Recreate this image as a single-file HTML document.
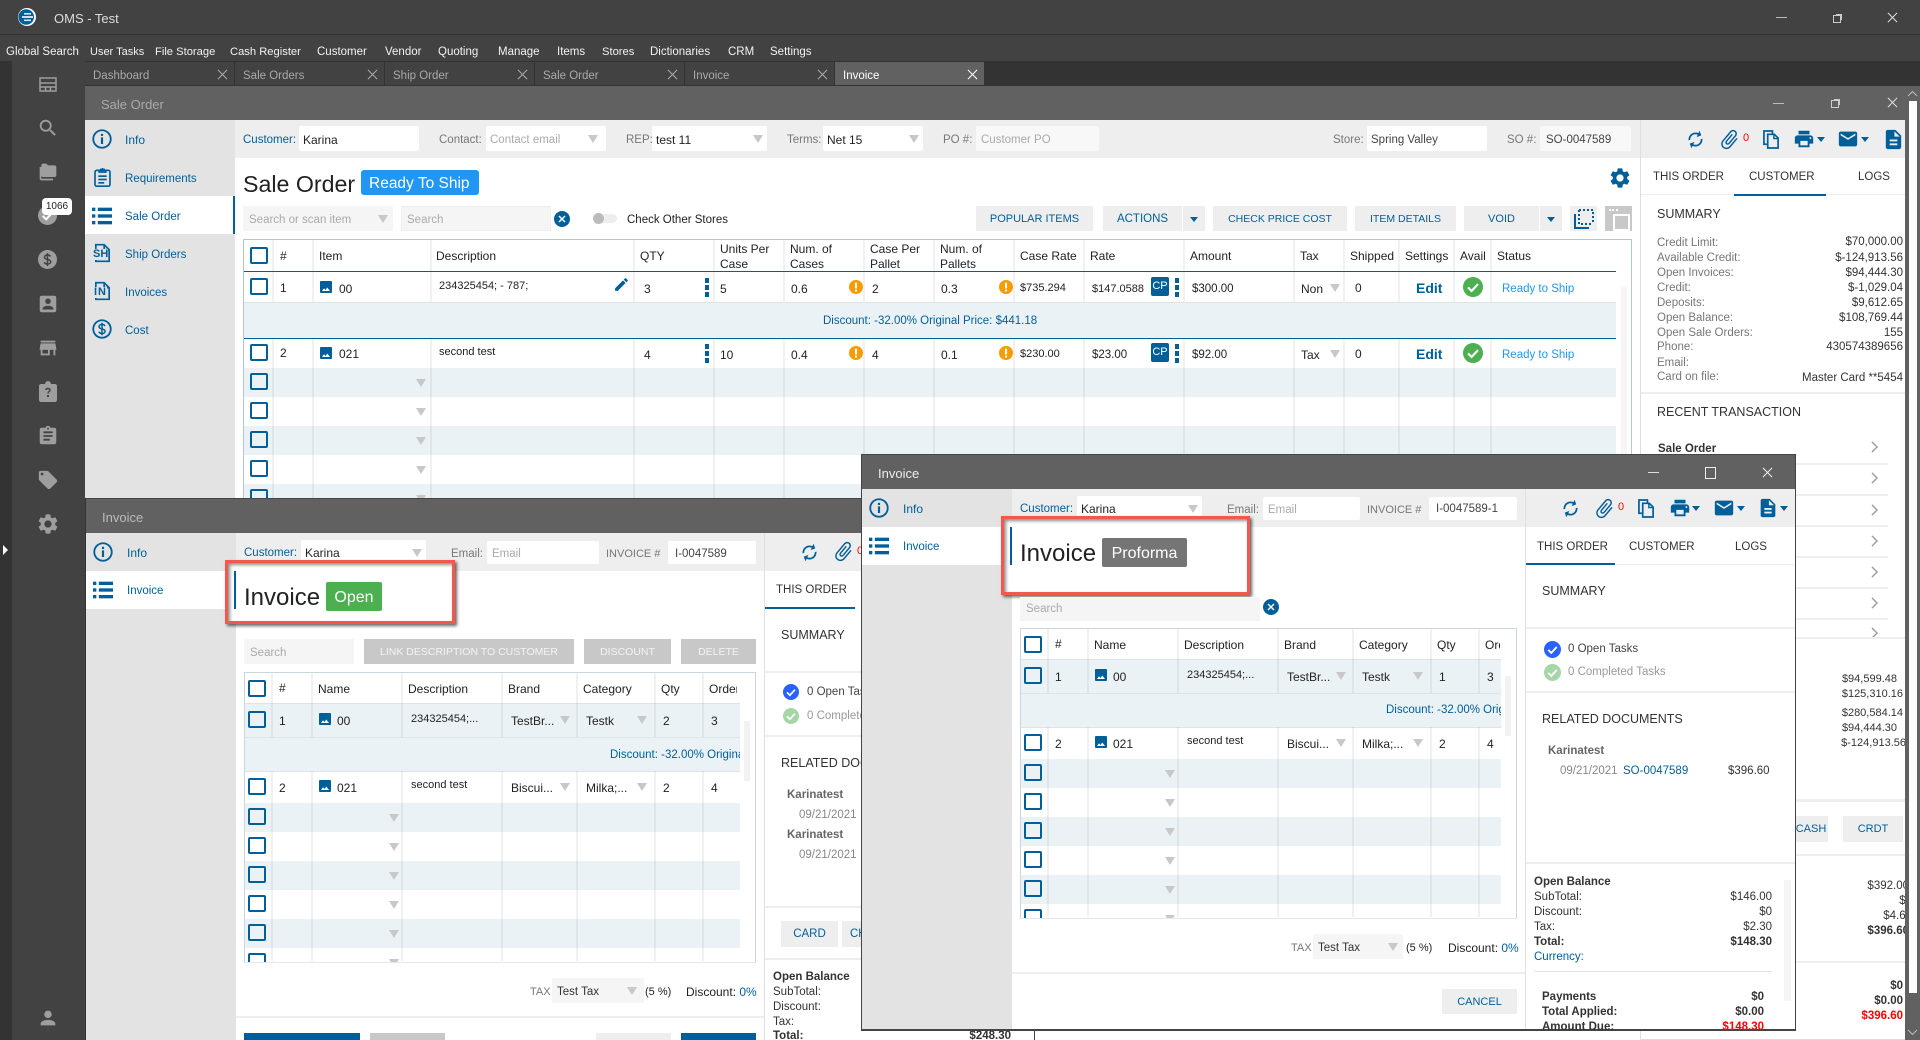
<!DOCTYPE html>
<html lang="en"><head><meta charset="utf-8"><title>OMS - Test</title>
<style>
html,body{margin:0;padding:0;background:#fff}
#r{position:relative;width:1920px;height:1040px;overflow:hidden;font-family:"Liberation Sans",sans-serif;font-size:12px;color:#222;background:#fff}
p{position:absolute;margin:0;white-space:nowrap;line-height:14px;font-size:12px;transform:translateY(1px)}
u{position:absolute;display:block;text-decoration:none}
svg{position:absolute;fill:currentColor;color:#005f99;overflow:visible}
.bl{color:#005f99}.g{color:#777}.ph{color:#aaa}.m{color:#f2f2f2;font-size:11.5px;top:44px}
.tb{color:#aaa;font-size:11.5px;top:68px}
.a{width:0;height:0;border-left:5px solid transparent;border-right:5px solid transparent;border-top:8px solid #c8c8c8}
.at{width:0;height:0;border-left:4px solid transparent;border-right:4px solid transparent;border-top:5px solid #005f99}
.btn{background:#eee;color:#005f99;font-size:11px;text-align:center;height:25px;line-height:27px;transform:none}
.dis{background:#c8c8c8;color:#f3f3f3;font-size:10.5px;text-align:center;height:25px;line-height:27px;transform:none}
.c{width:14px;height:13px;border:2px solid #005f99;border-radius:2px}
.in{background:#fff;height:25px;border-radius:2px}
.d{width:4px;height:5px;background:#005f99}
.band{background:#ebf2f6}
.ln{background:rgba(40,60,80,.07);width:2px}
.hr{background:#eee;height:2px}
.s{font-size:11.5px}
.sm{font-size:11.5px;color:#777}
.rv{font-size:11.5px;color:#333}
.box{border:3px solid #f4574b;background:#fff;box-shadow:2px 2px 3px rgba(0,0,0,.6),inset 2px 2px 3px rgba(0,0,0,.45)}
.tbl{overflow:hidden;border:1px solid #c9d6e0;border-bottom:1px solid #e4e8ea;background:#fff;height:289px}
.tbl p{transform:none}
.nv{color:#005f99;font-size:12px}
.cp{background:#005f99;color:#fff;font-size:11px;text-align:center;width:18px;height:19px;line-height:19px;border-radius:2px;transform:none}
.ed{color:#005f99;font-size:14px;font-weight:bold}
</style></head><body><div id="r">
<svg width="0" height="0" style="position:absolute">
<defs>
<symbol id="info" viewBox="0 0 24 24"><circle cx="12" cy="12" r="10.5" fill="none" stroke="currentColor" stroke-width="2.2"/><rect x="10.7" y="10" width="2.6" height="8"/><rect x="10.7" y="5.8" width="2.6" height="2.6"/></symbol>
<symbol id="list" viewBox="0 0 24 24"><rect x="0" y="2" width="4" height="4"/><rect x="7" y="2" width="17" height="4"/><rect x="0" y="10" width="4" height="4"/><rect x="7" y="10" width="17" height="4"/><rect x="0" y="18" width="4" height="4"/><rect x="7" y="18" width="17" height="4"/></symbol>
<symbol id="req" viewBox="0 0 20 24"><path d="M3 4h3v2h8V4h3c1 0 2 1 2 2v15c0 1-1 2-2 2H3c-1 0-2-1-2-2V6c0-1 1-2 2-2z" fill="none" stroke="currentColor" stroke-width="2"/><path d="M7 5V2h2a1 1 0 0 1 2 0h2v3z"/><rect x="5" y="10" width="10" height="2"/><rect x="5" y="14" width="10" height="2"/><rect x="5" y="18" width="7" height="2"/></symbol>
<symbol id="doc" viewBox="0 0 20 24"><path d="M2 8V2h10l6 6v14H2v-2" fill="none" stroke="currentColor" stroke-width="2"/><path d="M12 2v6h6" fill="none" stroke="currentColor" stroke-width="2"/></symbol>
<symbol id="cost" viewBox="0 0 24 24"><circle cx="12" cy="12" r="10.5" fill="none" stroke="currentColor" stroke-width="2.2"/><path d="M15.5 8.5c-.5-1.400-2-2-3.500-2-2 0-3.500 1-3.500 2.800 0 3.700 7.200 1.700 7.200 5.400 0 1.800-1.700 2.800-3.700 2.800-1.700 0-3.200-.8-3.700-2.300M12 4.500v15" fill="none" stroke="currentColor" stroke-width="1.800"/></symbol>
<symbol id="gear" viewBox="0 0 24 24"><path d="M19.14 12.94c.04-.3.06-.61.06-.94 0-.32-.02-.64-.07-.94l2.03-1.58c.18-.14.23-.41.12-.61l-1.92-3.32c-.12-.22-.37-.29-.59-.22l-2.39.96c-.5-.38-1.03-.7-1.62-.94l-.36-2.54c-.04-.24-.24-.41-.48-.41h-3.84c-.24 0-.43.17-.47.41l-.36 2.54c-.59.24-1.13.57-1.62.94l-2.39-.96c-.22-.08-.47 0-.59.22L2.74 8.87c-.12.21-.08.47.12.61l2.03 1.58c-.05.3-.09.63-.09.94s.02.64.07.94l-2.03 1.58c-.18.14-.23.41-.12.61l1.92 3.32c.12.22.37.29.59.22l2.39-.96c.5.38 1.03.7 1.62.94l.36 2.54c.05.24.24.41.48.41h3.84c.24 0 .44-.17.47-.41l.36-2.54c.59-.24 1.13-.56 1.62-.94l2.39.96c.22.08.47 0 .59-.22l1.92-3.32c.12-.22.07-.47-.12-.61l-2.01-1.58zM12 15.6c-1.98 0-3.6-1.62-3.6-3.6s1.62-3.6 3.6-3.6 3.6 1.62 3.6 3.6-1.62 3.6-3.6 3.6z"/></symbol>
<symbol id="print" viewBox="0 0 24 24"><path d="M19 8H5c-1.66 0-3 1.34-3 3v6h4v4h12v-4h4v-6c0-1.66-1.34-3-3-3zm-3 11H8v-5h8v5zm3-7c-.55 0-1-.45-1-1s.45-1 1-1 1 .45 1 1-.45 1-1 1zm-1-9H6v4h12V3z"/></symbol>
<symbol id="mail" viewBox="0 0 24 24"><path d="M20 4H4c-1.1 0-1.99.9-1.99 2L2 18c0 1.1.9 2 2 2h16c1.1 0 2-.9 2-2V6c0-1.1-.9-2-2-2zm0 4l-8 5-8-5V6l8 5 8-5v2z"/></symbol>
<symbol id="desc" viewBox="0 0 24 24"><path d="M14 2H6c-1.1 0-1.99.9-1.99 2L4 20c0 1.1.89 2 1.99 2H18c1.1 0 2-.9 2-2V8l-6-6zm2 16H8v-2h8v2zm0-4H8v-2h8v2zm-3-5V3.500L18.500 9H13z"/></symbol>
<symbol id="clip" viewBox="0 0 24 24"><g transform="rotate(40 12 12)"><path d="M16.500 6v11.500c0 2.210-1.790 4-4 4s-4-1.790-4-4V5c0-1.380 1.120-2.500 2.500-2.500s2.500 1.120 2.500 2.500v10.500c0 .55-.45 1-1 1s-1-.45-1-1V6H10v9.500c0 1.380 1.120 2.500 2.500 2.500s2.500-1.120 2.500-2.500V5c0-2.210-1.790-4-4-4S7 2.790 7 5v12.500c0 3.040 2.460 5.500 5.500 5.500s5.500-2.460 5.500-5.500V6h-1.500z"/></g></symbol>
<symbol id="copy" viewBox="0 0 18 20"><path d="M4 15H1V1h9v3M5 4.500h7l4 4V19H5z" fill="none" stroke="currentColor" stroke-width="1.800"/><path d="M11.500 4.500v4.500h4.500" fill="none" stroke="currentColor" stroke-width="1.500"/></symbol>
<symbol id="sync" viewBox="0 0 24 24"><g transform="rotate(25 12 12)"><path d="M12 6v3l4-4-4-4v3c-4.420 0-8 3.580-8 8 0 1.570.46 3.030 1.240 4.260L6.700 14.800c-.45-.83-.7-1.790-.7-2.800 0-3.310 2.690-6 6-6zm6.760 1.740L17.300 9.200c.44.84.7 1.790.7 2.800 0 3.310-2.690 6-6 6v-3l-4 4 4 4v-3c4.420 0 8-3.580 8-8 0-1.570-.46-3.030-1.240-4.260z"/></g></symbol>
<symbol id="img" viewBox="0 0 24 24"><rect x="0" y="0" width="24" height="24" rx="2"/><path d="M4 20l4-5.500 3 3.500 3.500-5 5.500 7z" fill="#fff"/></symbol>
<symbol id="edit" viewBox="0 0 24 24"><path d="M3 17.250V21h3.750L17.810 9.940l-3.750-3.750L3 17.250zM20.710 7.040c.39-.39.39-1.020 0-1.410l-2.340-2.340c-.39-.39-1.020-.39-1.410 0l-1.830 1.830 3.750 3.750 1.830-1.830z"/></symbol>
<symbol id="ok" viewBox="0 0 24 24"><circle cx="12" cy="12" r="12"/><path d="M6 12.500l4.300 4.300L18 8.500" fill="none" stroke="#fff" stroke-width="2.600"/></symbol>
<symbol id="warn" viewBox="0 0 24 24"><circle cx="12" cy="12" r="12" fill="#f59c00"/><rect x="10.200" y="4.500" width="3.600" height="10" rx="1" fill="#fff"/><rect x="10.200" y="16.200" width="3.600" height="3.600" rx="1" fill="#fff"/></symbol>
<symbol id="x" viewBox="0 0 12 12"><path d="M1 1l10 10M11 1L1 11" fill="none" stroke="currentColor" stroke-width="1.100"/></symbol>
<symbol id="chev" viewBox="0 0 8 14"><path d="M1 1l6 6-6 6" fill="none" stroke="#9a9a9a" stroke-width="1.600"/></symbol>
<symbol id="xc" viewBox="0 0 16 16"><circle cx="8" cy="8" r="8" fill="#005f99"/><path d="M5 5l6 6M11 5l-6 6" stroke="#fff" stroke-width="1.500" fill="none"/></symbol>
</defs></svg>

<!-- top chrome -->
<u style="left:0;top:0;width:1920px;height:61px;background:#424242"></u>
<u style="left:0;top:34px;width:1920px;height:1px;background:#333"></u>
<svg width="18" height="18" viewBox="0 0 18 18" style="left:18px;top:8px"><circle cx="9" cy="9" r="9" fill="#fff"/><circle cx="8.200" cy="9" r="7.800" fill="#005f99"/><rect x="6" y="5" width="7" height="1.600" fill="#cfe6f5"/><rect x="4" y="8.200" width="11" height="1.600" fill="#fff"/><rect x="6" y="11.500" width="7" height="1.600" fill="#cfe6f5"/></svg>
<p style="left:54px;top:11px;font-size:13px;color:#ddd">OMS - Test</p>
<u style="left:1776px;top:17px;width:11px;height:1px;background:#bbb"></u>
<u style="left:1833px;top:15px;width:6px;height:6px;border:1px solid #ccc;box-shadow:2px -2px 0 -1px #ccc"></u>
<svg width="11" height="11" style="left:1887px;top:12px;color:#ddd"><use href="#x"/></svg>

<p class="m" style="left:6px">Global Search</p><p class="m" style="left:90px;font-size:11px">User Tasks</p><p class="m" style="left:155px;font-size:11.2px">File Storage</p><p class="m" style="left:230px;font-size:11.2px">Cash Register</p><p class="m" style="left:317px">Customer</p><p class="m" style="left:385px">Vendor</p><p class="m" style="left:438px">Quoting</p><p class="m" style="left:498px">Manage</p><p class="m" style="left:557px">Items</p><p class="m" style="left:602px;font-size:11.2px">Stores</p><p class="m" style="left:650px">Dictionaries</p><p class="m" style="left:728px">CRM</p><p class="m" style="left:770px">Settings</p>

<!-- rail -->
<u style="left:0;top:61px;width:12px;height:979px;background:#333"></u>
<u style="left:12px;top:61px;width:73px;height:979px;background:#424242"></u>
<svg width="18" height="15" viewBox="0 0 18 15" style="left:39px;top:77px;color:#9e9e9e"><path d="M1 1h16v13H1zM1 6h16M1 10h16M6.500 10v4M11.500 10v4" fill="none" stroke="currentColor" stroke-width="1.500"/></svg>
<svg width="22" height="22" style="left:37px;top:117px;color:#9e9e9e" viewBox="0 0 24 24"><path d="M15.500 14h-.79l-.28-.27C15.410 12.590 16 11.110 16 9.500 16 5.910 13.090 3 9.500 3S3 5.910 3 9.500 5.910 16 9.500 16c1.610 0 3.090-.59 4.230-1.570l.27.28v.79l5 4.990L20.490 19l-4.990-5zm-6 0C7.010 14 5 11.990 5 9.500S7.010 5 9.500 5 14 7.010 14 9.500 11.990 14 9.500 14z"/></svg>
<svg width="20" height="20" style="left:38px;top:162px;color:#9e9e9e" viewBox="0 0 24 24"><path d="M4 6H2v14c0 1.100.9 2 2 2h14v-2H4V6zm16-2h-8l-2-2H6c-1.100 0-2 .9-2 2v12c0 1.100.9 2 2 2h14c1.100 0 2-.9 2-2V6c0-1.100-.9-2-2-2z"/></svg>
<svg width="19" height="19" style="left:38px;top:206px;color:#9e9e9e"><use href="#ok"/></svg>
<u style="left:42px;top:198px;width:30px;height:17px;background:#fff;border-radius:4px"></u>
<p style="left:42px;top:199px;width:30px;text-align:center;font-size:10px;color:#222">1066</p>
<svg width="19" height="19" style="left:38px;top:250px;color:#9e9e9e" viewBox="0 0 19 19"><circle cx="9.500" cy="9.500" r="9.500"/><path d="M12.500 6.500c-.5-1-1.700-1.500-3-1.500-1.700 0-3 .8-3 2.200 0 3 6.200 1.400 6.200 4.500 0 1.500-1.400 2.300-3.200 2.300-1.400 0-2.700-.6-3.200-1.800M9.500 3v13" stroke="#424242" stroke-width="1.500" fill="none"/></svg>
<svg width="22" height="22" style="left:37px;top:293px;color:#9e9e9e" viewBox="0 0 24 24"><path d="M19 3H5c-1.100 0-2 .9-2 2v14c0 1.100.9 2 2 2h14c1.100 0 2-.9 2-2V5c0-1.100-.9-2-2-2zm-7 3c1.660 0 3 1.340 3 3s-1.340 3-3 3-3-1.340-3-3 1.340-3 3-3zm6 12H6v-1c0-2 4-3.100 6-3.100s6 1.100 6 3.100v1z"/></svg>
<svg width="22" height="22" style="left:37px;top:337px;color:#9e9e9e" viewBox="0 0 24 24"><path d="M20 4H4v2h16V4zm1 10v-2l-1-5H4l-1 5v2h1v6h10v-6h4v6h2v-6h1zm-9 4H6v-4h6v4z"/></svg>
<svg width="18" height="20" viewBox="0 0 18 20" style="left:39px;top:382px;color:#9e9e9e"><path d="M2 2h4a3 3 0 0 1 6 0h4c1 0 2 1 2 2v14c0 1-1 2-2 2H2c-1 0-2-1-2-2V4c0-1 1-2 2-2z"/><path d="M7 8c0-2 4-2 4 0 0 1.500-2 1.500-2 3.500" stroke="#424242" stroke-width="1.500" fill="none"/><rect x="8" y="13" width="2" height="2" fill="#424242"/></svg>
<svg width="22" height="22" style="left:37px;top:425px;color:#9e9e9e" viewBox="0 0 24 24"><path d="M19 3h-4.180C14.400 1.840 13.300 1 12 1c-1.300 0-2.400.84-2.820 2H5c-1.100 0-2 .9-2 2v14c0 1.100.9 2 2 2h14c1.100 0 2-.9 2-2V5c0-1.100-.9-2-2-2zm-7 0c.55 0 1 .45 1 1s-.45 1-1 1-1-.45-1-1 .45-1 1-1zm2 14H7v-2h7v2zm3-4H7v-2h10v2zm0-4H7V7h10v2z"/></svg>
<svg width="22" height="22" style="left:37px;top:469px;color:#9e9e9e" viewBox="0 0 24 24"><path d="M21.410 11.580l-9-9C12.050 2.220 11.550 2 11 2H4c-1.100 0-2 .9-2 2v7c0 .55.22 1.050.59 1.420l9 9c.36.36.86.58 1.410.58.55 0 1.050-.22 1.410-.59l7-7c.37-.36.59-.86.59-1.410 0-.55-.23-1.060-.59-1.420zM5.500 7C4.670 7 4 6.330 4 5.500S4.670 4 5.500 4 7 4.670 7 5.500 6.330 7 5.500 7z"/></svg>
<svg width="24" height="24" style="left:36px;top:512px;color:#9e9e9e"><use href="#gear"/></svg>
<svg width="22" height="22" style="left:37px;top:1007px;color:#9e9e9e" viewBox="0 0 24 24"><path d="M12 12c2.210 0 4-1.790 4-4s-1.790-4-4-4-4 1.790-4 4 1.790 4 4 4zm0 2c-2.670 0-8 1.340-8 4v2h16v-2c0-2.660-5.330-4-8-4z"/></svg>
<u style="left:3px;top:545px;width:0;height:0;border-top:5px solid transparent;border-bottom:5px solid transparent;border-left:5px solid #fff"></u>

<!-- tab bar -->
<u style="left:85px;top:61px;width:1835px;height:25px;background:#333"></u>
<u style="left:85px;top:62px;width:149px;height:23px;background:#424242"></u><u style="left:235px;top:62px;width:149px;height:23px;background:#424242"></u><u style="left:385px;top:62px;width:149px;height:23px;background:#424242"></u><u style="left:535px;top:62px;width:149px;height:23px;background:#424242"></u><u style="left:685px;top:62px;width:149px;height:23px;background:#424242"></u><u style="left:835px;top:62px;width:149px;height:23px;background:#616161"></u>
<p class="tb" style="left:93px">Dashboard</p><p class="tb" style="left:243px">Sale Orders</p><p class="tb" style="left:393px">Ship Order</p><p class="tb" style="left:543px">Sale Order</p><p class="tb" style="left:693px">Invoice</p><p class="tb" style="left:843px;color:#fff">Invoice</p>
<svg width="11" height="11" style="left:217px;top:69px;color:#aaa"><use href="#x"/></svg><svg width="11" height="11" style="left:367px;top:69px;color:#aaa"><use href="#x"/></svg><svg width="11" height="11" style="left:517px;top:69px;color:#aaa"><use href="#x"/></svg><svg width="11" height="11" style="left:667px;top:69px;color:#aaa"><use href="#x"/></svg><svg width="11" height="11" style="left:817px;top:69px;color:#aaa"><use href="#x"/></svg><svg width="11" height="11" style="left:967px;top:69px;color:#fff"><use href="#x"/></svg>

<!-- ================= SALE ORDER WINDOW ================= -->
<u style="left:85px;top:86px;width:1835px;height:34px;background:#616161"></u>
<p style="left:101px;top:97px;font-size:13px;color:#aaa">Sale Order</p>
<u style="left:1773px;top:103px;width:11px;height:1px;background:#bbb"></u>
<u style="left:1831px;top:100px;width:6px;height:6px;border:1px solid #ccc;box-shadow:2px -2px 0 -1px #ccc"></u>
<svg width="11" height="11" style="left:1887px;top:97px;color:#ddd"><use href="#x"/></svg>
<u style="left:85px;top:120px;width:150px;height:378px;background:#e3e3e3"></u>
<u style="left:85px;top:196px;width:148px;height:38px;background:#fff"></u><u style="left:233px;top:196px;width:2px;height:38px;background:#005f99"></u>
<svg width="20" height="20" style="left:92px;top:129px"><use href="#info"/></svg><p class="nv" style="left:125px;top:132px">Info</p>
<svg width="17" height="20" style="left:94px;top:167px"><use href="#req"/></svg><p class="nv" style="left:125px;top:171px;font-size:11.500px">Requirements</p>
<svg width="20" height="20" style="left:92px;top:206px"><use href="#list"/></svg><p class="nv" style="left:125px;top:209px;font-size:11.500px">Sale Order</p>
<svg width="17" height="20" style="left:94px;top:243px"><use href="#doc"/></svg><p style="left:93px;top:248px;font-size:11px;font-weight:bold;color:#005f99;background:#e3e3e3;line-height:11px">SH</p><p class="nv" style="left:125px;top:247px;font-size:11.500px">Ship Orders</p>
<svg width="17" height="20" style="left:94px;top:281px"><use href="#doc"/></svg><p style="left:94px;top:286px;font-size:11px;font-weight:bold;color:#005f99;background:#e3e3e3;line-height:11px;letter-spacing:1px">IN</p><p class="nv" style="left:125px;top:285px;font-size:11.500px">Invoices</p>
<svg width="20" height="20" style="left:92px;top:319px"><use href="#cost"/></svg><p class="nv" style="left:125px;top:323px;font-size:11.500px">Cost</p>

<!-- form band -->
<u style="left:235px;top:120px;width:1670px;height:38px;background:#eee"></u>
<u style="left:299px;top:126px;width:120px" class="in"></u><u style="left:486px;top:126px;width:120px" class="in"></u><u style="left:652px;top:126px;width:115px" class="in"></u><u style="left:823px;top:126px;width:100px" class="in"></u><u style="left:976px;top:126px;width:123px;background:#f8f8f8" class="in"></u><u style="left:1367px;top:126px;width:120px" class="in"></u><u style="left:1540px;top:126px;width:91px;background:#f8f8f8" class="in"></u>
<p class="bl s" style="left:243px;top:132px">Customer:</p><p style="left:303px;top:132px">Karina</p>
<p class="g s" style="left:439px;top:132px">Contact:</p><p class="ph s" style="left:490px;top:132px">Contact email</p><u class="a" style="left:588px;top:135px"></u>
<p class="g s" style="left:626px;top:132px">REP:</p><p style="left:656px;top:132px">test 11</p><u class="a" style="left:753px;top:135px"></u>
<p class="g s" style="left:787px;top:132px">Terms:</p><p style="left:827px;top:132px">Net 15</p><u class="a" style="left:909px;top:135px"></u>
<p class="g s" style="left:943px;top:132px">PO #:</p><p class="ph s" style="left:981px;top:132px">Customer PO</p>
<p class="g s" style="left:1333px;top:132px">Store:</p><p class="s" style="left:1371px;top:132px;color:#444">Spring Valley</p>
<p class="g s" style="left:1507px;top:132px">SO #:</p><p class="s" style="left:1546px;top:132px;color:#444">SO-0047589</p>
<u style="left:1640px;top:120px;width:1px;height:920px;background:#dedede"></u>
<svg width="21" height="21" style="left:1685px;top:129px"><use href="#sync"/></svg>
<svg width="23" height="23" style="left:1718px;top:128px"><use href="#clip"/></svg><p style="left:1743px;top:130px;color:#f00;font-size:11px">0</p>
<svg width="17" height="19" style="left:1763px;top:130px"><use href="#copy"/></svg>
<svg width="22" height="22" style="left:1793px;top:128px"><use href="#print"/></svg><u class="at" style="left:1817px;top:137px"></u>
<svg width="22" height="22" style="left:1837px;top:128px"><use href="#mail"/></svg><u class="at" style="left:1861px;top:137px"></u>
<svg width="23" height="23" style="left:1882px;top:128px"><use href="#desc"/></svg>

<!-- heading -->
<p style="left:243px;top:169px;font-size:23.2px;line-height:28px;color:#222">Sale Order</p>
<u style="left:361px;top:170px;width:118px;height:25px;background:#2196f3;border-radius:3px"></u>
<p style="left:369px;top:173px;font-size:15.500px;line-height:19px;color:#fff">Ready To Ship</p>
<svg width="20" height="20" style="left:1610px;top:168px" viewBox="2 2 20 20"><use href="#gear" width="24" height="24"/></svg>

<!-- toolbar -->
<u style="left:243px;top:206px;width:150px;height:25px;background:#f5f5f5;border-radius:2px"></u><p class="ph s" style="left:249px;top:212px">Search or scan item</p><u class="a" style="left:378px;top:215px"></u>
<u style="left:401px;top:206px;width:148px;height:23px;background:#f5f5f5;border:1px solid #eee"></u><p class="ph s" style="left:407px;top:212px">Search</p>
<svg width="16" height="16" style="left:554px;top:211px"><use href="#xc"/></svg>
<u style="left:595px;top:214px;width:22px;height:9px;background:#eee;border-radius:5px"></u><u style="left:593px;top:213px;width:11px;height:11px;background:#bbb;border-radius:6px"></u>
<p class="s" style="left:627px;top:212px">Check Other Stores</p>
<p class="btn" style="left:976px;top:206px;width:117px">POPULAR ITEMS</p>
<p class="btn" style="left:1103px;top:206px;width:79px;font-size:11.5px">ACTIONS</p><u style="left:1183px;top:206px;width:22px;height:25px;background:#eee"></u><u class="at" style="left:1190px;top:217px"></u>
<p class="btn" style="left:1213px;top:206px;width:134px;font-size:10.5px">CHECK PRICE COST</p>
<p class="btn" style="left:1355px;top:206px;width:101px;font-size:10.5px">ITEM DETAILS</p>
<p class="btn" style="left:1464px;top:206px;width:75px">VOID</p><u style="left:1540px;top:206px;width:22px;height:25px;background:#eee"></u><u class="at" style="left:1547px;top:217px"></u>
<u style="left:1570px;top:206px;width:27px;height:25px;background:#eee"></u>
<svg width="20" height="20" viewBox="0 0 20 20" style="left:1574px;top:209px"><path d="M5 1h14v14" fill="none" stroke="currentColor" stroke-width="2" stroke-dasharray="2 2"/><path d="M5 1v14h14" fill="none" stroke="currentColor" stroke-width="2" stroke-dasharray="2 2"/><path d="M1 5v14h14" fill="none" stroke="currentColor" stroke-width="2"/></svg>
<u style="left:1605px;top:206px;width:27px;height:25px;background:#c8c8c8"></u>
<u style="left:1613px;top:214px;width:13px;height:13px;background:#c8c8c8;border:2px solid #fff"></u><u style="left:1609px;top:209px;width:9px;height:2px;border-top:2px dotted #fff"></u>

<!-- sale order table -->
<u style="left:243px;top:239px;width:1388px;height:1px;background:#b6c6d6"></u>
<u style="left:243px;top:239px;width:1px;height:259px;background:#b6c6d6"></u>
<u style="left:1631px;top:239px;width:1px;height:259px;background:#b6c6d6"></u>
<u class="band" style="left:244px;top:302px;width:1372px;height:36px"></u>
<u class="band" style="left:244px;top:368px;width:1372px;height:29px"></u>
<u class="band" style="left:244px;top:426px;width:1372px;height:29px"></u>
<u class="band" style="left:244px;top:484px;width:1372px;height:14px"></u>
<u style="left:1621px;top:287px;width:6px;height:211px;background:#f6f6f6"></u>
<u class="ln" style="left:272px;top:240px;height:62px"></u><u class="ln" style="left:312px;top:240px;height:62px"></u><u class="ln" style="left:430px;top:240px;height:62px"></u><u class="ln" style="left:633px;top:240px;height:62px"></u><u class="ln" style="left:713px;top:240px;height:62px"></u><u class="ln" style="left:783px;top:240px;height:62px"></u><u class="ln" style="left:863px;top:240px;height:62px"></u><u class="ln" style="left:933px;top:240px;height:62px"></u><u class="ln" style="left:1013px;top:240px;height:62px"></u><u class="ln" style="left:1083px;top:240px;height:62px"></u><u class="ln" style="left:1183px;top:240px;height:62px"></u><u class="ln" style="left:1293px;top:240px;height:62px"></u><u class="ln" style="left:1343px;top:240px;height:62px"></u><u class="ln" style="left:1398px;top:240px;height:62px"></u><u class="ln" style="left:1453px;top:240px;height:62px"></u><u class="ln" style="left:1490px;top:240px;height:62px"></u>
<u class="ln" style="left:272px;top:338px;height:160px"></u><u class="ln" style="left:312px;top:338px;height:160px"></u><u class="ln" style="left:430px;top:338px;height:160px"></u><u class="ln" style="left:633px;top:338px;height:160px"></u><u class="ln" style="left:713px;top:338px;height:160px"></u><u class="ln" style="left:783px;top:338px;height:160px"></u><u class="ln" style="left:863px;top:338px;height:160px"></u><u class="ln" style="left:933px;top:338px;height:160px"></u><u class="ln" style="left:1013px;top:338px;height:160px"></u><u class="ln" style="left:1083px;top:338px;height:160px"></u><u class="ln" style="left:1183px;top:338px;height:160px"></u><u class="ln" style="left:1293px;top:338px;height:160px"></u><u class="ln" style="left:1343px;top:338px;height:160px"></u><u class="ln" style="left:1398px;top:338px;height:160px"></u><u class="ln" style="left:1453px;top:338px;height:160px"></u><u class="ln" style="left:1490px;top:338px;height:160px"></u>
<u style="left:244px;top:271px;width:1372px;height:1px;background:#005f99"></u>
<u style="left:244px;top:338px;width:1372px;height:1px;background:#005f99"></u>
<u style="left:244px;top:302px;width:1372px;height:1px;background:#dde4e8"></u>
<u class="c" style="left:250px;top:247px"></u>
<p style="left:280px;top:248px">#</p><p style="left:319px;top:248px">Item</p><p style="left:436px;top:248px">Description</p><p style="left:640px;top:248px">QTY</p><p style="left:720px;top:241px;line-height:15px">Units Per<br>Case</p><p style="left:790px;top:241px;line-height:15px">Num. of<br>Cases</p><p style="left:870px;top:241px;line-height:15px">Case Per<br>Pallet</p><p style="left:940px;top:241px;line-height:15px">Num. of<br>Pallets</p><p style="left:1020px;top:248px">Case Rate</p><p style="left:1090px;top:248px">Rate</p><p style="left:1190px;top:248px">Amount</p><p style="left:1300px;top:248px">Tax</p><p style="left:1350px;top:248px">Shipped</p><p style="left:1405px;top:248px">Settings</p><p style="left:1460px;top:248px">Avail</p><p style="left:1497px;top:248px">Status</p>
<!-- row 1 -->
<u class="c" style="left:250px;top:278px"></u><p style="left:280px;top:280px">1</p><svg width="12" height="12" style="left:320px;top:281px"><use href="#img"/></svg><p style="left:339px;top:281px">00</p><p style="left:439px;top:278px;font-size:11px">234325454; - 787;</p>
<svg width="17" height="17" style="left:613px;top:276px"><use href="#edit"/></svg>
<p style="left:644px;top:281px">3</p><u class="d" style="left:705px;top:278px"></u><u class="d" style="left:705px;top:285px"></u><u class="d" style="left:705px;top:292px"></u>
<p style="left:720px;top:281px">5</p><p style="left:791px;top:281px">0.6</p><svg width="14" height="14" style="left:849px;top:280px"><use href="#warn"/></svg><p style="left:872px;top:281px">2</p><p style="left:941px;top:281px">0.3</p><svg width="14" height="14" style="left:999px;top:280px"><use href="#warn"/></svg><p style="left:1020px;top:280px;font-size:11px">$735.294</p><p style="left:1092px;top:281px;font-size:11px">$147.0588</p><p class="cp" style="left:1151px;top:277px">CP</p><u class="d" style="left:1175px;top:278px"></u><u class="d" style="left:1175px;top:285px"></u><u class="d" style="left:1175px;top:292px"></u><p class="s" style="left:1192px;top:281px">$300.00</p><p style="left:1301px;top:281px">Non</p><u class="a" style="left:1330px;top:284px"></u><p style="left:1355px;top:280px">0</p><p class="ed" style="left:1416px;top:280px">Edit</p><svg width="20" height="20" style="left:1463px;top:277px;color:#4caf50"><use href="#ok"/></svg><p class="s" style="left:1502px;top:281px;color:#2196f3">Ready to Ship</p>
<p class="bl s" style="left:823px;top:313px">Discount: -32.00% Original Price: $441.18</p>
<!-- row 2 -->
<u class="c" style="left:250px;top:344px"></u><p style="left:280px;top:345px">2</p><svg width="12" height="12" style="left:320px;top:347px"><use href="#img"/></svg><p style="left:339px;top:346px">021</p><p style="left:439px;top:344px;font-size:11px">second test</p>
<p style="left:644px;top:347px">4</p><u class="d" style="left:705px;top:344px"></u><u class="d" style="left:705px;top:351px"></u><u class="d" style="left:705px;top:358px"></u>
<p style="left:720px;top:347px">10</p><p style="left:791px;top:347px">0.4</p><svg width="14" height="14" style="left:849px;top:346px"><use href="#warn"/></svg><p style="left:872px;top:347px">4</p><p style="left:941px;top:347px">0.1</p><svg width="14" height="14" style="left:999px;top:346px"><use href="#warn"/></svg><p style="left:1020px;top:346px;font-size:11px">$230.00</p><p class="s" style="left:1092px;top:347px">$23.00</p><p class="cp" style="left:1151px;top:343px">CP</p><u class="d" style="left:1175px;top:344px"></u><u class="d" style="left:1175px;top:351px"></u><u class="d" style="left:1175px;top:358px"></u><p class="s" style="left:1192px;top:347px">$92.00</p><p style="left:1301px;top:347px">Tax</p><u class="a" style="left:1330px;top:350px"></u><p style="left:1355px;top:346px">0</p><p class="ed" style="left:1416px;top:346px">Edit</p><svg width="20" height="20" style="left:1463px;top:343px;color:#4caf50"><use href="#ok"/></svg><p class="s" style="left:1502px;top:347px;color:#2196f3">Ready to Ship</p>
<u class="c" style="left:250px;top:373px"></u><u class="a" style="left:416px;top:379px"></u>
<u class="c" style="left:250px;top:402px"></u><u class="a" style="left:416px;top:408px"></u>
<u class="c" style="left:250px;top:431px"></u><u class="a" style="left:416px;top:437px"></u>
<u class="c" style="left:250px;top:460px"></u><u class="a" style="left:416px;top:466px"></u>
<u class="c" style="left:250px;top:489px"></u><u class="a" style="left:416px;top:495px"></u>

<!-- sale order right panel -->
<p class="s" style="left:1653px;top:169px;color:#333">THIS ORDER</p><p class="s" style="left:1749px;top:169px;color:#333">CUSTOMER</p><p class="s" style="left:1858px;top:169px;color:#333">LOGS</p>
<u class="hr" style="left:1641px;top:194px;width:264px;height:1px"></u><u style="left:1734px;top:194px;width:92px;height:2px;background:#005f99"></u>
<p style="left:1657px;top:206px;font-size:12.500px;color:#333">SUMMARY</p>
<p class="sm" style="left:1657px;top:235px">Credit Limit:</p><p class="rv" style="right:17px;top:234px">$70,000.00</p>
<p class="sm" style="left:1657px;top:250px">Available Credit:</p><p class="rv" style="right:17px;top:250px">$-124,913.56</p>
<p class="sm" style="left:1657px;top:265px">Open Invoices:</p><p class="rv" style="right:17px;top:265px">$94,444.30</p>
<p class="sm" style="left:1657px;top:280px">Credit:</p><p class="rv" style="right:17px;top:280px">$-1,029.04</p>
<p class="sm" style="left:1657px;top:295px">Deposits:</p><p class="rv" style="right:17px;top:295px">$9,612.65</p>
<p class="sm" style="left:1657px;top:310px">Open Balance:</p><p class="rv" style="right:17px;top:310px">$108,769.44</p>
<p class="sm" style="left:1657px;top:325px">Open Sale Orders:</p><p class="rv" style="right:17px;top:325px">155</p>
<p class="sm" style="left:1657px;top:339px">Phone:</p><p class="rv" style="right:17px;top:339px">430574389656</p>
<p class="sm" style="left:1657px;top:355px">Email:</p>
<p class="sm" style="left:1657px;top:369px">Card on file:</p><p class="rv" style="right:17px;top:370px">Master Card **5454</p>
<u class="hr" style="left:1641px;top:392px;width:264px"></u>
<p style="left:1657px;top:404px;font-size:12.500px;color:#333">RECENT TRANSACTION</p>
<p style="left:1658px;top:441px;font-size:11.500px;font-weight:bold;color:#333">Sale Order</p>
<svg width="7" height="12" style="left:1871px;top:441px"><use href="#chev"/></svg><svg width="7" height="12" style="left:1871px;top:472px"><use href="#chev"/></svg><svg width="7" height="12" style="left:1871px;top:504px"><use href="#chev"/></svg><svg width="7" height="12" style="left:1871px;top:535px"><use href="#chev"/></svg><svg width="7" height="12" style="left:1871px;top:566px"><use href="#chev"/></svg><svg width="7" height="12" style="left:1871px;top:597px"><use href="#chev"/></svg><svg width="7" height="12" style="left:1871px;top:627px"><use href="#chev"/></svg>
<u class="hr" style="left:1657px;top:463px;width:231px"></u><u class="hr" style="left:1657px;top:494px;width:231px"></u><u class="hr" style="left:1657px;top:525px;width:231px"></u><u class="hr" style="left:1657px;top:556px;width:231px"></u><u class="hr" style="left:1657px;top:587px;width:231px"></u><u class="hr" style="left:1657px;top:618px;width:231px"></u>
<u class="hr" style="left:1641px;top:637px;width:264px"></u>
<p class="rv" style="right:23px;top:671px;font-size:11px">$94,599.48</p><p class="rv" style="right:17px;top:686px;font-size:11px">$125,310.16</p><p class="rv" style="right:17px;top:705px;font-size:11px">$280,584.14</p><p class="rv" style="right:23px;top:720px;font-size:11px">$94,444.30</p><p class="rv" style="right:14px;top:735px;font-size:11px">$-124,913.56</p>
<u style="left:1641px;top:799px;width:264px;height:3px;background:#eee"></u>
<p class="btn" style="left:1794px;top:816px;width:34px;height:26px;line-height:27px;background:#eee;overflow:visible">CASH</p>
<p class="btn" style="left:1843px;top:816px;width:60px;height:26px;line-height:27px">CRDT</p>
<u class="hr" style="left:1641px;top:854px;width:264px"></u>
<p class="rv" style="right:11px;top:878px">$392.00</p><p class="rv" style="right:8px;top:893px">$0</p><p class="rv" style="right:8px;top:908px">$4.68</p><p class="rv" style="right:11px;top:923px;font-weight:bold">$396.60</p>
<u class="hr" style="left:1641px;top:961px;width:264px"></u>
<p class="rv" style="right:17px;top:978px;font-weight:bold">$0</p><p class="rv" style="right:17px;top:993px;font-weight:bold">$0.00</p><p class="rv" style="right:17px;top:1008px;font-weight:bold;color:#f00">$396.60</p>
<u style="left:1640px;top:1039px;width:265px;height:1px;background:#ddd"></u>
<!-- outer scrollbar -->
<u style="left:1905px;top:86px;width:15px;height:954px;background:#616161"></u>
<u style="left:1909px;top:101px;width:8px;height:892px;background:#fdfdfd"></u>
<svg width="9" height="5" viewBox="0 0 9 5" style="left:1908px;top:91px"><path d="M0 5l4.500-4.500L9 5" fill="none" stroke="#bbb" stroke-width="1"/></svg>
<svg width="9" height="5" viewBox="0 0 9 5" style="left:1908px;top:1030px"><path d="M0 0l4.500 4.500L9 0" fill="none" stroke="#bbb" stroke-width="1"/></svg>

<!-- ================= INVOICE WINDOW 2 ================= -->
<u style="left:85px;top:498px;width:949px;height:542px;background:#fff"></u>
<u style="left:85px;top:498px;width:949px;height:1px;background:#444"></u>
<u style="left:85px;top:498px;width:1px;height:542px;background:#333"></u>
<u style="left:1034px;top:498px;width:1px;height:542px;background:#444"></u>
<u style="left:86px;top:499px;width:948px;height:34px;background:#616161"></u>
<p style="left:102px;top:510px;font-size:13px;color:#bbb">Invoice</p>
<u style="left:86px;top:533px;width:150px;height:507px;background:#e3e3e3"></u>
<u style="left:86px;top:571px;width:150px;height:38px;background:#fff"></u>
<svg width="20" height="20" style="left:93px;top:542px"><use href="#info"/></svg><p class="nv" style="left:127px;top:545px">Info</p>
<svg width="20" height="20" style="left:93px;top:580px"><use href="#list"/></svg><p class="nv" style="left:127px;top:583px;font-size:11.500px">Invoice</p>
<u style="left:236px;top:533px;width:798px;height:38px;background:#eee"></u>
<u style="left:764px;top:533px;width:1px;height:507px;background:#e0e0e0"></u>
<u class="in" style="left:301px;top:540px;width:125px"></u><p class="bl s" style="left:244px;top:545px">Customer:</p><p style="left:305px;top:545px">Karina</p><u class="a" style="left:412px;top:549px"></u>
<p class="g s" style="left:451px;top:546px">Email:</p><u class="in" style="left:487px;top:541px;width:112px;height:23px"></u><p class="ph s" style="left:492px;top:546px">Email</p>
<p class="g s" style="left:606px;top:546px;font-size:11px">INVOICE #</p><u class="in" style="left:668px;top:541px;width:88px;height:23px"></u><p class="s" style="left:675px;top:546px;color:#444">I-0047589</p>
<svg width="21" height="21" style="left:799px;top:542px"><use href="#sync"/></svg><svg width="23" height="23" style="left:832px;top:540px"><use href="#clip"/></svg><p style="left:857px;top:543px;color:#f00;font-size:11px">0</p>

<u class="box" style="left:225px;top:560px;width:224px;height:58px"></u>
<u style="left:234px;top:571px;width:2px;height:38px;background:#005f99"></u>
<p style="left:244px;top:582px;font-size:24px;line-height:30px;color:#222">Invoice</p>
<u style="left:326px;top:582px;width:56px;height:29px;background:#4caf50;border-radius:2px"></u><p style="left:326px;top:587px;width:56px;text-align:center;font-size:16px;line-height:19px;color:#fff">Open</p>

<u style="left:244px;top:639px;width:110px;height:25px;background:#f5f5f5"></u><p class="ph s" style="left:250px;top:645px">Search</p>
<p class="dis" style="left:364px;top:639px;width:210px">LINK DESCRIPTION TO CUSTOMER</p><p class="dis" style="left:584px;top:639px;width:87px">DISCOUNT</p><p class="dis" style="left:681px;top:639px;width:75px">DELETE</p>

<!-- table 2 -->
<div class="tbl" style="position:absolute;left:244px;top:672px;width:510px">
<u class="band" style="left:0;top:30px;width:495px;height:34px"></u><u class="band" style="left:0;top:65px;width:495px;height:33px"></u><u class="band" style="left:0;top:130px;width:495px;height:29px"></u><u class="band" style="left:0;top:188px;width:495px;height:29px"></u><u class="band" style="left:0;top:246px;width:495px;height:29px"></u>
<u style="left:499px;top:48px;width:6px;height:60px;background:#f2f2f2"></u>
<u style="left:0;top:64px;width:495px;height:1px;background:#dde4e8"></u><u style="left:0;top:98px;width:495px;height:1px;background:#dde4e8"></u><u style="left:0;top:30px;width:495px;height:1px;background:#dde4e8"></u>
<u class="ln" style="left:26px;top:0;height:64px"></u><u class="ln" style="left:66px;top:0;height:64px"></u><u class="ln" style="left:156px;top:0;height:64px"></u><u class="ln" style="left:256px;top:0;height:64px"></u><u class="ln" style="left:331px;top:0;height:64px"></u><u class="ln" style="left:409px;top:0;height:64px"></u><u class="ln" style="left:457px;top:0;height:64px"></u>
<u class="ln" style="left:26px;top:98px;height:190px"></u><u class="ln" style="left:66px;top:98px;height:190px"></u><u class="ln" style="left:156px;top:98px;height:190px"></u><u class="ln" style="left:256px;top:98px;height:190px"></u><u class="ln" style="left:331px;top:98px;height:190px"></u><u class="ln" style="left:409px;top:98px;height:190px"></u><u class="ln" style="left:457px;top:98px;height:190px"></u>
<u class="c" style="left:3px;top:7px"></u><p style="left:34px;top:8px">#</p><p style="left:73px;top:9px">Name</p><p style="left:163px;top:9px">Description</p><p style="left:263px;top:9px">Brand</p><p style="left:338px;top:9px">Category</p><p style="left:416px;top:9px">Qty</p><p style="left:464px;top:9px;width:28px;overflow:hidden">Order</p>
<u class="c" style="left:3px;top:38px"></u><p style="left:34px;top:41px">1</p><svg width="12" height="12" style="left:74px;top:40px"><use href="#img"/></svg><p style="left:92px;top:41px">00</p><p style="left:166px;top:39px;font-size:11px">234325454;...</p><p style="left:266px;top:41px">TestBr...</p><u class="a" style="left:315px;top:43px"></u><p style="left:341px;top:41px">Testk</p><u class="a" style="left:392px;top:43px"></u><p style="left:418px;top:41px">2</p><p style="left:466px;top:41px">3</p>
<div style="position:absolute;left:0;top:0;width:495px;height:289px;overflow:hidden"><p class="bl s" style="left:365px;top:75px">Discount: -32.00% Original Price: $441.18</p></div>
<u class="c" style="left:3px;top:105px"></u><p style="left:34px;top:108px">2</p><svg width="12" height="12" style="left:74px;top:107px"><use href="#img"/></svg><p style="left:92px;top:108px">021</p><p style="left:166px;top:105px;font-size:11px">second test</p><p style="left:266px;top:108px">Biscui...</p><u class="a" style="left:315px;top:110px"></u><p style="left:341px;top:108px">Milka;...</p><u class="a" style="left:392px;top:110px"></u><p style="left:418px;top:108px">2</p><p style="left:466px;top:108px">4</p>
<u class="c" style="left:3px;top:135px"></u><u class="a" style="left:144px;top:141px"></u>
<u class="c" style="left:3px;top:164px"></u><u class="a" style="left:144px;top:170px"></u>
<u class="c" style="left:3px;top:193px"></u><u class="a" style="left:144px;top:199px"></u>
<u class="c" style="left:3px;top:222px"></u><u class="a" style="left:144px;top:228px"></u>
<u class="c" style="left:3px;top:251px"></u><u class="a" style="left:144px;top:257px"></u>
<u class="c" style="left:3px;top:280px"></u><u class="a" style="left:144px;top:286px"></u>
</div>
<p class="g s" style="left:530px;top:984px;font-size:11px">TAX</p><u style="left:552px;top:978px;width:92px;height:25px;background:#f5f5f5;border-radius:2px"></u><p class="s" style="left:557px;top:984px;color:#333">Test Tax</p><u class="a" style="left:627px;top:987px"></u><p class="s" style="left:645px;top:984px;font-size:11px">(5 %)</p><p style="left:686px;top:984px">Discount: <span style="color:#005f99">0%</span></p>
<u class="hr" style="left:236px;top:1016px;width:528px"></u>
<u style="left:244px;top:1033px;width:116px;height:7px;background:#005f99"></u><u style="left:370px;top:1033px;width:75px;height:7px;background:#c8c8c8"></u><u style="left:596px;top:1033px;width:75px;height:7px;background:#eee"></u><u style="left:681px;top:1033px;width:75px;height:7px;background:#005f99"></u>
<!-- win 2 right panel -->
<p class="s" style="left:776px;top:582px;color:#333">THIS ORDER</p><u style="left:765px;top:607px;width:90px;height:2px;background:#005f99"></u>
<p style="left:781px;top:627px;font-size:12.500px;color:#333">SUMMARY</p><u class="hr" style="left:765px;top:671px;width:269px"></u>
<svg width="16" height="16" style="left:783px;top:684px;color:#2962ff"><use href="#ok"/></svg><p class="s" style="left:807px;top:684px;color:#444">0 Open Tasks</p>
<svg width="16" height="16" style="left:783px;top:708px;color:#a5d6a7"><use href="#ok"/></svg><p class="s" style="left:807px;top:708px;color:#999">0 Completed Tasks</p>
<u class="hr" style="left:765px;top:735px;width:269px"></u>
<p style="left:781px;top:755px;font-size:12.500px;color:#333">RELATED DOCUMENTS</p>
<p class="s" style="left:787px;top:787px;font-weight:bold;color:#666">Karinatest</p><p class="s" style="left:799px;top:807px;color:#888">09/21/2021</p><p class="s" style="left:787px;top:827px;font-weight:bold;color:#666">Karinatest</p><p class="s" style="left:799px;top:847px;color:#888">09/21/2021</p>
<u class="hr" style="left:765px;top:906px;width:269px"></u>
<p class="btn" style="left:781px;top:921px;width:57px;height:26px;line-height:27px;font-size:11.5px">CARD</p><p class="btn" style="left:842px;top:921px;width:60px;height:26px;line-height:27px;text-align:left;padding-left:8px;font-size:11.5px">CHECK</p>
<u class="hr" style="left:765px;top:958px;width:269px"></u>
<p style="left:773px;top:969px;font-size:11.500px;font-weight:bold;color:#333">Open Balance</p><p class="s" style="left:773px;top:984px;color:#333">SubTotal:</p><p class="s" style="left:773px;top:999px;color:#333">Discount:</p><p class="s" style="left:773px;top:1014px;color:#333">Tax:</p><p style="left:773px;top:1028px;font-size:11.500px;font-weight:bold;color:#333">Total:</p>
<p style="right:909px;top:1028px;font-size:11.500px;font-weight:bold;color:#333">$248.30</p>

<!-- ================= INVOICE WINDOW 3 ================= -->
<u style="left:861px;top:454px;width:933px;height:574px;background:#fff;border:1px solid #444;border-bottom:2px solid #444"></u>
<u style="left:862px;top:455px;width:933px;height:34px;background:#616161"></u>
<p style="left:878px;top:466px;font-size:13px;color:#eee">Invoice</p>
<u style="left:1648px;top:472px;width:11px;height:1px;background:#ddd"></u><u style="left:1705px;top:467px;width:9px;height:10px;border:1px solid #eee"></u><svg width="11" height="11" style="left:1762px;top:467px;color:#eee"><use href="#x"/></svg>
<u style="left:862px;top:489px;width:150px;height:540px;background:#e3e3e3"></u>
<u style="left:862px;top:527px;width:150px;height:38px;background:#fff"></u>
<svg width="20" height="20" style="left:869px;top:498px"><use href="#info"/></svg><p class="nv" style="left:903px;top:501px">Info</p>
<svg width="20" height="20" style="left:869px;top:536px"><use href="#list"/></svg><p class="nv" style="left:903px;top:539px;font-size:11.500px">Invoice</p>
<u style="left:1012px;top:489px;width:783px;height:38px;background:#eee"></u>
<u style="left:1525px;top:489px;width:1px;height:540px;background:#e0e0e0"></u>
<p class="bl s" style="left:1020px;top:501px">Customer:</p><u class="in" style="left:1077px;top:496px;width:125px"></u><p style="left:1081px;top:501px">Karina</p><u class="a" style="left:1188px;top:505px"></u>
<p class="g s" style="left:1227px;top:502px">Email:</p><u class="in" style="left:1263px;top:497px;width:97px;height:23px"></u><p class="ph s" style="left:1268px;top:502px">Email</p>
<p class="g s" style="left:1367px;top:502px;font-size:11px">INVOICE #</p><u class="in" style="left:1429px;top:497px;width:88px;height:23px"></u><p class="s" style="left:1436px;top:501px;color:#444">I-0047589-1</p>
<svg width="21" height="21" style="left:1560px;top:498px"><use href="#sync"/></svg><svg width="23" height="23" style="left:1593px;top:497px"><use href="#clip"/></svg><p style="left:1618px;top:499px;color:#f00;font-size:11px">0</p>
<svg width="17" height="19" style="left:1638px;top:499px"><use href="#copy"/></svg>
<svg width="22" height="22" style="left:1669px;top:497px"><use href="#print"/></svg><u class="at" style="left:1692px;top:506px"></u>
<svg width="22" height="22" style="left:1713px;top:497px"><use href="#mail"/></svg><u class="at" style="left:1737px;top:506px"></u>
<svg width="22" height="22" style="left:1757px;top:497px"><use href="#desc"/></svg><u class="at" style="left:1780px;top:506px"></u>

<u class="box" style="left:1001px;top:516px;width:243px;height:73px"></u>
<u style="left:1010px;top:527px;width:2px;height:38px;background:#005f99"></u>
<p style="left:1020px;top:538px;font-size:24px;line-height:30px;color:#222">Invoice</p>
<u style="left:1102px;top:538px;width:85px;height:29px;background:#757575;border-radius:2px"></u><p style="left:1102px;top:543px;width:85px;text-align:center;font-size:16px;line-height:19px;color:#fff">Proforma</p>

<u style="left:1020px;top:597px;width:240px;height:24px;background:#f5f5f5"></u><p class="ph s" style="left:1026px;top:601px">Search</p>
<svg width="16" height="16" style="left:1263px;top:599px"><use href="#xc"/></svg>

<!-- table 3 -->
<div class="tbl" style="position:absolute;left:1020px;top:628px;width:495px">
<u class="band" style="left:0;top:30px;width:480px;height:34px"></u><u class="band" style="left:0;top:65px;width:480px;height:33px"></u><u class="band" style="left:0;top:130px;width:480px;height:29px"></u><u class="band" style="left:0;top:188px;width:480px;height:29px"></u><u class="band" style="left:0;top:246px;width:480px;height:29px"></u>
<u style="left:484px;top:47px;width:6px;height:60px;background:#f2f2f2"></u>
<u style="left:0;top:64px;width:480px;height:1px;background:#dde4e8"></u><u style="left:0;top:98px;width:480px;height:1px;background:#dde4e8"></u><u style="left:0;top:30px;width:480px;height:1px;background:#dde4e8"></u>
<u class="ln" style="left:26px;top:0;height:64px"></u><u class="ln" style="left:66px;top:0;height:64px"></u><u class="ln" style="left:156px;top:0;height:64px"></u><u class="ln" style="left:256px;top:0;height:64px"></u><u class="ln" style="left:331px;top:0;height:64px"></u><u class="ln" style="left:409px;top:0;height:64px"></u><u class="ln" style="left:457px;top:0;height:64px"></u>
<u class="ln" style="left:26px;top:98px;height:190px"></u><u class="ln" style="left:66px;top:98px;height:190px"></u><u class="ln" style="left:156px;top:98px;height:190px"></u><u class="ln" style="left:256px;top:98px;height:190px"></u><u class="ln" style="left:331px;top:98px;height:190px"></u><u class="ln" style="left:409px;top:98px;height:190px"></u><u class="ln" style="left:457px;top:98px;height:190px"></u>
<u class="c" style="left:3px;top:7px"></u><p style="left:34px;top:8px">#</p><p style="left:73px;top:9px">Name</p><p style="left:163px;top:9px">Description</p><p style="left:263px;top:9px">Brand</p><p style="left:338px;top:9px">Category</p><p style="left:416px;top:9px">Qty</p><p style="left:464px;top:9px;width:15px;overflow:hidden">Order</p>
<u class="c" style="left:3px;top:38px"></u><p style="left:34px;top:41px">1</p><svg width="12" height="12" style="left:74px;top:40px"><use href="#img"/></svg><p style="left:92px;top:41px">00</p><p style="left:166px;top:39px;font-size:11px">234325454;...</p><p style="left:266px;top:41px">TestBr...</p><u class="a" style="left:315px;top:43px"></u><p style="left:341px;top:41px">Testk</p><u class="a" style="left:392px;top:43px"></u><p style="left:418px;top:41px">1</p><p style="left:466px;top:41px">3</p>
<div style="position:absolute;left:0;top:0;width:480px;height:289px;overflow:hidden"><p class="bl s" style="left:365px;top:74px">Discount: -32.00% Original Price: $441.18</p></div>
<u class="c" style="left:3px;top:105px"></u><p style="left:34px;top:108px">2</p><svg width="12" height="12" style="left:74px;top:107px"><use href="#img"/></svg><p style="left:92px;top:108px">021</p><p style="left:166px;top:105px;font-size:11px">second test</p><p style="left:266px;top:108px">Biscui...</p><u class="a" style="left:315px;top:110px"></u><p style="left:341px;top:108px">Milka;...</p><u class="a" style="left:392px;top:110px"></u><p style="left:418px;top:108px">2</p><p style="left:466px;top:108px">4</p>
<u class="c" style="left:3px;top:135px"></u><u class="a" style="left:144px;top:141px"></u>
<u class="c" style="left:3px;top:164px"></u><u class="a" style="left:144px;top:170px"></u>
<u class="c" style="left:3px;top:193px"></u><u class="a" style="left:144px;top:199px"></u>
<u class="c" style="left:3px;top:222px"></u><u class="a" style="left:144px;top:228px"></u>
<u class="c" style="left:3px;top:251px"></u><u class="a" style="left:144px;top:257px"></u>
<u class="c" style="left:3px;top:280px"></u><u class="a" style="left:144px;top:286px"></u>
</div>
<p class="g s" style="left:1291px;top:940px;font-size:11px">TAX</p><u style="left:1313px;top:934px;width:90px;height:25px;background:#f5f5f5;border-radius:2px"></u><p class="s" style="left:1318px;top:940px;color:#333">Test Tax</p><u class="a" style="left:1388px;top:943px"></u><p class="s" style="left:1406px;top:940px;font-size:11px">(5 %)</p><p style="left:1448px;top:940px">Discount: <span style="color:#005f99">0%</span></p>
<u class="hr" style="left:1012px;top:972px;width:513px"></u>
<p class="btn" style="left:1442px;top:989px;width:75px">CANCEL</p>
<!-- win 3 right panel -->
<p class="s" style="left:1537px;top:539px;color:#333">THIS ORDER</p><p class="s" style="left:1629px;top:539px;color:#333">CUSTOMER</p><p class="s" style="left:1735px;top:539px;color:#333">LOGS</p>
<u style="left:1526px;top:564px;width:269px;height:1px;background:#eee"></u><u style="left:1526px;top:563px;width:89px;height:2px;background:#005f99"></u>
<p style="left:1542px;top:583px;font-size:12.500px;color:#333">SUMMARY</p><u class="hr" style="left:1526px;top:627px;width:269px"></u>
<svg width="17" height="17" style="left:1544px;top:641px;color:#2962ff"><use href="#ok"/></svg><p class="s" style="left:1568px;top:641px;color:#444">0 Open Tasks</p>
<svg width="17" height="17" style="left:1544px;top:664px;color:#a5d6a7"><use href="#ok"/></svg><p class="s" style="left:1568px;top:664px;color:#999">0 Completed Tasks</p>
<u class="hr" style="left:1526px;top:691px;width:269px"></u>
<p style="left:1542px;top:711px;font-size:12.500px;color:#333">RELATED DOCUMENTS</p>
<p class="s" style="left:1548px;top:743px;font-weight:bold;color:#666">Karinatest</p><p class="s" style="left:1560px;top:763px;color:#888">09/21/2021</p><p class="s" style="left:1623px;top:763px;color:#005f99">SO-0047589</p><p class="s" style="left:1728px;top:763px;color:#333">$396.60</p>
<u class="hr" style="left:1526px;top:862px;width:269px"></u>
<u style="left:1784px;top:880px;width:7px;height:121px;background:#f5f5f5"></u>
<p style="left:1534px;top:874px;font-size:11.500px;font-weight:bold;color:#333">Open Balance</p>
<p class="s" style="left:1534px;top:889px;color:#333">SubTotal:</p><p class="rv" style="right:148px;top:889px">$146.00</p>
<p class="s" style="left:1534px;top:904px;color:#333">Discount:</p><p class="rv" style="right:148px;top:904px">$0</p>
<p class="s" style="left:1534px;top:919px;color:#333">Tax:</p><p class="rv" style="right:148px;top:919px">$2.30</p>
<p style="left:1534px;top:934px;font-size:11.500px;font-weight:bold;color:#333">Total:</p><p class="rv" style="right:148px;top:934px;font-weight:bold">$148.30</p>
<p class="s" style="left:1534px;top:949px;color:#005f99">Currency:</p>
<u style="left:1534px;top:971px;width:238px;height:1px;background:#e4e4e4"></u>
<p style="left:1542px;top:989px;font-size:11.500px;font-weight:bold;color:#333">Payments</p><p class="rv" style="right:156px;top:989px;font-weight:bold">$0</p>
<p style="left:1542px;top:1004px;font-size:11.500px;font-weight:bold;color:#333">Total Applied:</p><p class="rv" style="right:156px;top:1004px;font-weight:bold">$0.00</p>
<p style="left:1542px;top:1019px;font-size:11.500px;font-weight:bold;color:#333;clip-path:inset(0 0 4px 0)">Amount Due:</p><p class="rv" style="right:156px;top:1019px;font-weight:bold;color:#f00;clip-path:inset(0 0 4px 0)">$148.30</p>
</div></body></html>
